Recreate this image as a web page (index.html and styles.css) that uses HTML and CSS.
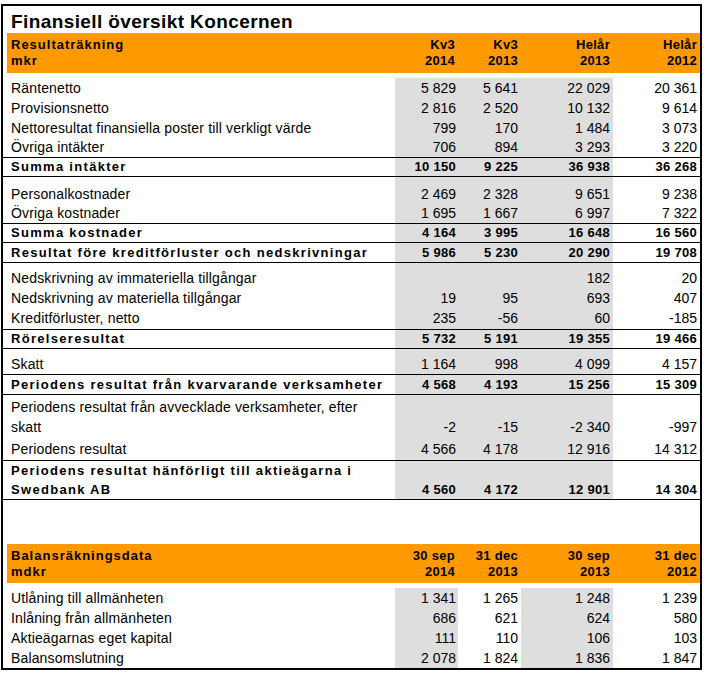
FILE: index.html
```html
<!DOCTYPE html>
<html lang="sv">
<head>
<meta charset="utf-8">
<title>Finansiell översikt Koncernen</title>
<link rel="stylesheet" href="styles.css">
</head>
<body>
<div class="sheet">
  <div class="title">Finansiell översikt Koncernen</div>

  <div class="row head h40">
    <span></span>
    <span class="lbl">Resultaträkning<br>mkr</span>
    <span class="num">Kv3<br>2014</span>
    <span class="num">Kv3<br>2013</span>
    <span class="num">Helår<br>2013</span>
    <span class="num">Helår<br>2012</span>
  </div>
  <div class="row gap5"></div>

  <div class="sect inc">
    <div class="row"><span></span><span class="lbl">Räntenetto</span><span class="num c1">5 829</span><span class="num c2">5 641</span><span class="num c3">22 029</span><span class="num c4">20 361</span></div>
    <div class="row"><span></span><span class="lbl">Provisionsnetto</span><span class="num c1">2 816</span><span class="num c2">2 520</span><span class="num c3">10 132</span><span class="num c4">9 614</span></div>
    <div class="row"><span></span><span class="lbl">Nettoresultat finansiella poster till verkligt värde</span><span class="num c1">799</span><span class="num c2">170</span><span class="num c3">1 484</span><span class="num c4">3 073</span></div>
    <div class="row h19"><span></span><span class="lbl">Övriga intäkter</span><span class="num c1">706</span><span class="num c2">894</span><span class="num c3">3 293</span><span class="num c4">3 220</span></div>
    <div class="row sum bt bb"><span></span><span class="lbl">Summa intäkter</span><span class="num c1">10 150</span><span class="num c2">9 225</span><span class="num c3">36 938</span><span class="num c4">36 268</span></div>
    <div class="row gap7"><span></span><span></span><span class="c1"></span><span class="c2"></span><span class="c3"></span><span></span></div>
    <div class="row"><span></span><span class="lbl">Personalkostnader</span><span class="num c1">2 469</span><span class="num c2">2 328</span><span class="num c3">9 651</span><span class="num c4">9 238</span></div>
    <div class="row h19"><span></span><span class="lbl">Övriga kostnader</span><span class="num c1">1 695</span><span class="num c2">1 667</span><span class="num c3">6 997</span><span class="num c4">7 322</span></div>
    <div class="row sum bt bb"><span></span><span class="lbl">Summa kostnader</span><span class="num c1">4 164</span><span class="num c2">3 995</span><span class="num c3">16 648</span><span class="num c4">16 560</span></div>
    <div class="row sum bb lh19"><span></span><span class="lbl">Resultat före kreditförluster och nedskrivningar</span><span class="num c1">5 986</span><span class="num c2">5 230</span><span class="num c3">20 290</span><span class="num c4">19 708</span></div>
    <div class="row gap5"><span></span><span></span><span class="c1"></span><span class="c2"></span><span class="c3"></span><span></span></div>
    <div class="row"><span></span><span class="lbl">Nedskrivning av immateriella tillgångar</span><span class="num c1"></span><span class="num c2"></span><span class="num c3">182</span><span class="num c4">20</span></div>
    <div class="row"><span></span><span class="lbl">Nedskrivning av materiella tillgångar</span><span class="num c1">19</span><span class="num c2">95</span><span class="num c3">693</span><span class="num c4">407</span></div>
    <div class="row h21"><span></span><span class="lbl">Kreditförluster, netto</span><span class="num c1">235</span><span class="num c2">-56</span><span class="num c3">60</span><span class="num c4">-185</span></div>
    <div class="row sum bt bb"><span></span><span class="lbl">Rörelseresultat</span><span class="num c1">5 732</span><span class="num c2">5 191</span><span class="num c3">19 355</span><span class="num c4">19 466</span></div>
    <div class="row gap6"><span></span><span></span><span class="c1"></span><span class="c2"></span><span class="c3"></span><span></span></div>
    <div class="row h19"><span></span><span class="lbl">Skatt</span><span class="num c1">1 164</span><span class="num c2">998</span><span class="num c3">4 099</span><span class="num c4">4 157</span></div>
    <div class="row sum bt bb h21 lh19"><span></span><span class="lbl">Periodens resultat från kvarvarande verksamheter</span><span class="num c1">4 568</span><span class="num c2">4 193</span><span class="num c3">15 256</span><span class="num c4">15 309</span></div>
    <div class="row two"><span></span><span class="lbl">Periodens resultat från avvecklade verksamheter, efter<br>skatt</span><span class="num c1">-2</span><span class="num c2">-15</span><span class="num c3">-2 340</span><span class="num c4">-997</span></div>
    <div class="row one bb"><span></span><span class="lbl">Periodens resultat</span><span class="num c1">4 566</span><span class="num c2">4 178</span><span class="num c3">12 916</span><span class="num c4">14 312</span></div>
    <div class="row sum twob bb"><span></span><span class="lbl">Periodens resultat hänförligt till aktieägarna i<br>Swedbank AB</span><span class="num c1">4 560</span><span class="num c2">4 172</span><span class="num c3">12 901</span><span class="num c4">14 304</span></div>
  </div>

  <div class="row gap44"></div>

  <div class="row head h39">
    <span></span>
    <span class="lbl">Balansräkningsdata<br>mdkr</span>
    <span class="num">30 sep<br>2014</span>
    <span class="num">31 dec<br>2013</span>
    <span class="num">30 sep<br>2013</span>
    <span class="num">31 dec<br>2012</span>
  </div>
  <div class="row gap5"></div>

  <div class="sect bal">
    <div class="row"><span></span><span class="lbl">Utlåning till allmänheten</span><span class="num c1">1 341</span><span class="num c2">1 265</span><span class="num c3">1 248</span><span class="num c4">1 239</span></div>
    <div class="row"><span></span><span class="lbl">Inlåning från allmänheten</span><span class="num c1">686</span><span class="num c2">621</span><span class="num c3">624</span><span class="num c4">580</span></div>
    <div class="row"><span></span><span class="lbl">Aktieägarnas eget kapital</span><span class="num c1">111</span><span class="num c2">110</span><span class="num c3">106</span><span class="num c4">103</span></div>
    <div class="row"><span></span><span class="lbl">Balansomslutning</span><span class="num c1">2 078</span><span class="num c2">1 824</span><span class="num c3">1 836</span><span class="num c4">1 847</span></div>
  </div>
</div>
</body>
</html>
```

FILE: styles.css
```css
* { box-sizing: border-box; }

body {
  margin: 0;
  background: #ffffff;
  color: #000000;
  font-family: "Liberation Sans", Arial, sans-serif;
}

.sheet {
  margin: 4px 0 0 1px;
  width: 701px;
  height: 666px;
  border: 2px solid #000000;
}

.title {
  height: 27px;
  padding: 5px 0 0 8px;
  font-size: 19px;
  font-weight: bold;
  line-height: 22px;
  letter-spacing: 0.4px;
  white-space: nowrap;
}

.row {
  display: grid;
  grid-template-columns: 4px 388px 63px 63px 92px 87px;
  height: 20px;
  font-size: 14px;
  line-height: 20px;
}

.row > span { display: block; }

.lbl {
  padding-left: 4px;
  white-space: nowrap;
  letter-spacing: 0.15px;
}

.num {
  text-align: right;
  padding-right: 3px;
  white-space: nowrap;
}

.row > .c1 { padding-right: 2px; }
.row > .c4 { padding-right: 3px; }

/* header bands */
.head {
  font-size: 13px;
  font-weight: bold;
  line-height: 16px;
}
.head > span { padding-top: 4px; }
.head > span:not(:first-child) { background: #ff9900; }
.head .lbl { letter-spacing: 1px; }
.head .num { letter-spacing: 0.3px; }
.h40 { height: 40px; }
.h39 { height: 39px; }

/* grey value columns */
.inc .c1, .inc .c2, .inc .c3 { background: #dedede; }
.bal .c1, .bal .c3 { background: #dedede; }

/* spacer rows */
.gap5 { height: 5px; }
.gap6 { height: 6px; }
.gap7 { height: 7px; }
.gap44 { height: 44px; }

/* rule lines */
.bt { border-top: 1px solid #000000; }
.bb { border-bottom: 1px solid #000000; }

/* row heights */
.h19 { height: 19px; line-height: 19px; }
.h21 { height: 21px; }

.sum {
  font-size: 13px;
  font-weight: bold;
  line-height: 18px;
}
.sum .lbl { letter-spacing: 1.3px; }
.sum .num { letter-spacing: 0.3px; }
.lh19 { line-height: 19px; }

.two { height: 42px; }
.two .lbl { padding-top: 2px; }
.two .num { padding-top: 22px; }

.one { height: 24px; }
.one > span { padding-top: 2px; }

.twob { height: 39px; line-height: 19px; }
.twob .num { padding-top: 19px; }
```
